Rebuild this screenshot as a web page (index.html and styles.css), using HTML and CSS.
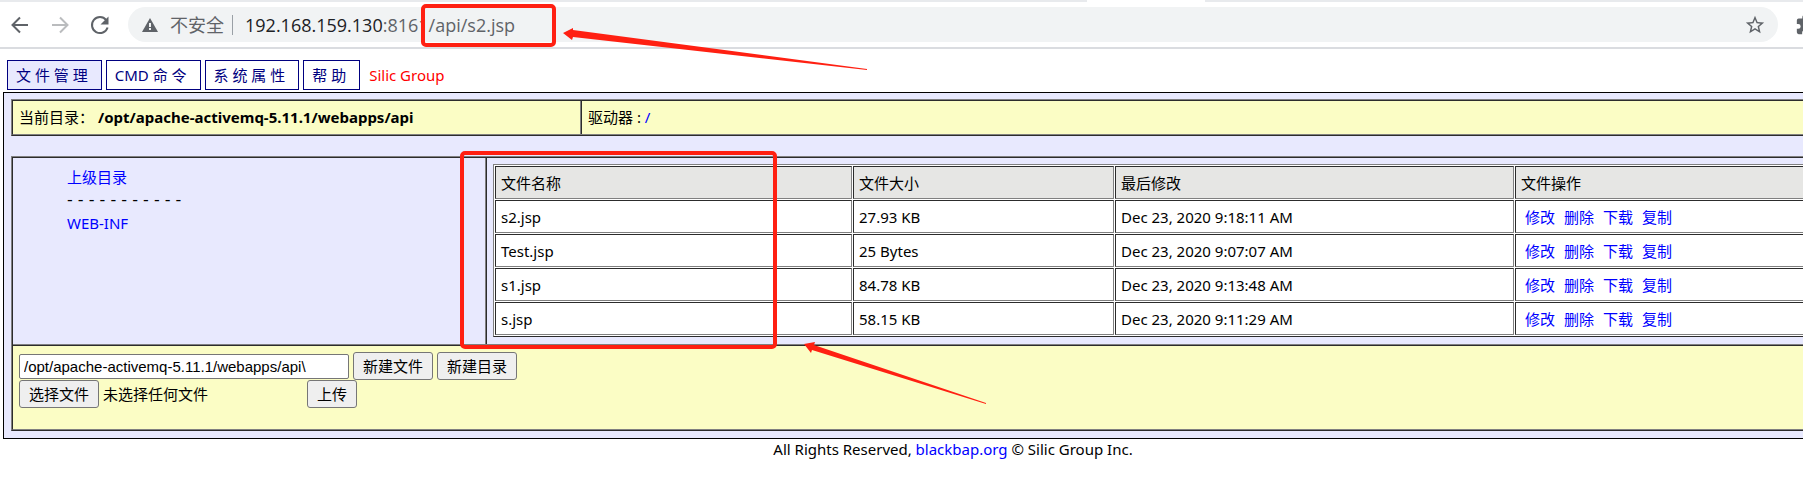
FILE: index.html
```html
<!DOCTYPE html>
<html lang="zh-CN">
<head>
<meta charset="utf-8">
<title>文件管理</title>
<link rel="stylesheet" href="styles.css">
</head>
<body>
<header class="toolbar">
  <div class="tabstrip"><span class="active-tab"></span></div>
  <div class="toolbar-row">
    <button class="icon-button" type="button" aria-label="后退"><svg width="24" height="24" viewBox="0 0 24 24" fill="none" stroke="#5f6368" stroke-width="2"><path d="M20 12H5M12 4.500L4.500 12l7.500 7.500"/></svg></button>
    <button class="icon-button" type="button" aria-label="前进"><svg width="24" height="24" viewBox="0 0 24 24" fill="none" stroke="#babcbe" stroke-width="2"><path d="M4 12h15M12 4.500l7.500 7.500-7.500 7.500"/></svg></button>
    <button class="icon-button" type="button" aria-label="刷新"><svg width="24" height="24" viewBox="0 0 24 24"><path fill="none" stroke="#5f6368" stroke-width="2" d="M18.200 7A8 8 0 1 0 19.600 14.500"/><path fill="#5f6368" d="M20.500 3.500v8h-8z"/></svg></button>
    <div class="address">
      <svg width="18" height="18" viewBox="0 0 18 18"><path fill="#5f6368" d="M9 2l8 14H1z"/><path fill="#f1f3f4" d="M8 7h2v4H8zM8 12h2v2H8z"/></svg>
      <span class="insecure">不安全</span>
      <span class="separator"></span>
      <span class="url"><span class="host">192.168.159.130</span>:8161/api/s2.jsp</span>
      <button class="icon-button star" type="button" aria-label="收藏"><svg width="22" height="22" viewBox="0 0 24 24"><path fill="#5f6368" d="M22 9.240l-7.190-.620L12 2 9.190 8.630 2 9.240l5.460 4.730L5.820 21 12 17.270 18.180 21l-1.630-7.030L22 9.240zM12 15.400l-3.760 2.270 1-4.280-3.320-2.880 4.380-.380L12 6.100l1.710 4.040 4.380.380-3.320 2.880 1 4.280L12 15.400z"/></svg></button>
    </div>
    <button class="icon-button extensions" type="button" aria-label="扩展程序"><svg width="22" height="22" viewBox="0 0 24 24"><path fill="#5f6368" d="M20.500 11H19V7a2 2 0 0 0-2-2h-4V3.500a2.500 2.500 0 0 0-5 0V5H4a2 2 0 0 0-2 2v3.800h1.500a2.700 2.700 0 0 1 0 5.400H2V20a2 2 0 0 0 2 2h3.800v-1.500a2.700 2.700 0 0 1 5.400 0V22H17a2 2 0 0 0 2-2v-4h1.500a2.500 2.500 0 0 0 0-5z"/></svg></button>
  </div>
</header>

<div class="page">
  <nav class="menu">
    <a class="menu-item current" href="#files">文 件 管 理</a>
    <a class="menu-item" href="#cmd">CMD 命 令</a>
    <a class="menu-item" href="#props">系 统 属 性</a>
    <a class="menu-item" href="#help">帮 助</a>
    <a class="brand" href="#brand">Silic Group</a>
  </nav>

  <main class="frame">
    <section class="info">
      <div class="info-cell">当前目录：<b class="path">/opt/apache-activemq-5.11.1/webapps/api</b></div>
      <div class="info-cell">驱动器 : <a href="#root">/</a></div>
    </section>

    <section class="browser">
      <div class="panes">
        <div class="tree">
          <a href="#up">上级目录</a>
          <span class="dashes">- - - - - - - - - - -</span>
          <a href="#web-inf">WEB-INF</a>
        </div>
        <div class="listing">
          <table class="files">
            <colgroup><col class="col-name"><col class="col-size"><col class="col-date"><col></colgroup>
            <thead><tr><th>文件名称</th><th>文件大小</th><th>最后修改</th><th>文件操作</th></tr></thead>
            <tbody>
              <tr><td>s2.jsp</td><td>27.93 KB</td><td>Dec 23, 2020 9:18:11 AM</td><td><div class="actions"><a href="#e">修改</a><a href="#d">删除</a><a href="#g">下载</a><a href="#c">复制</a></div></td></tr>
              <tr><td>Test.jsp</td><td>25 Bytes</td><td>Dec 23, 2020 9:07:07 AM</td><td><div class="actions"><a href="#e">修改</a><a href="#d">删除</a><a href="#g">下载</a><a href="#c">复制</a></div></td></tr>
              <tr><td>s1.jsp</td><td>84.78 KB</td><td>Dec 23, 2020 9:13:48 AM</td><td><div class="actions"><a href="#e">修改</a><a href="#d">删除</a><a href="#g">下载</a><a href="#c">复制</a></div></td></tr>
              <tr><td>s.jsp</td><td>58.15 KB</td><td>Dec 23, 2020 9:11:29 AM</td><td><div class="actions"><a href="#e">修改</a><a href="#d">删除</a><a href="#g">下载</a><a href="#c">复制</a></div></td></tr>
            </tbody>
          </table>
        </div>
      </div>
      <form class="forms">
        <div class="form-row">
          <input class="path-input" type="text" aria-label="路径" value="/opt/apache-activemq-5.11.1/webapps/api\">
          <button class="button" type="button">新建文件</button>
          <button class="button" type="button">新建目录</button>
        </div>
        <div class="form-row">
          <input class="file-input" id="upload" type="file">
          <label class="button" for="upload">选择文件</label>
          <span class="file-name">未选择任何文件</span>
          <button class="button" type="button">上传</button>
        </div>
      </form>
    </section>
  </main>
  <footer class="footer">All Rights Reserved, <a href="#site">blackbap.org</a> © Silic Group Inc.</footer>
</div>

<svg class="marks" width="1803" height="492" viewBox="0 0 1803 492" aria-hidden="true">
  <g fill="none" stroke="#ff2012" stroke-width="4">
    <rect x="423" y="6" width="131" height="39" rx="3"/>
    <rect x="462" y="153" width="313" height="194" rx="3"/>
  </g>
  <g fill="#ff2012">
    <path d="M563 33l10-5v2l294 39v1L573 37l-1 3z"/>
    <path d="M804 344l11-2-1 3 172 58v1L812 350l-1 3z"/>
  </g>
</svg>
</body>
</html>
```
FILE: styles.css
```css
* { box-sizing: border-box; }
body {
  margin: 0;
  position: relative;
  overflow-x: hidden;
  background: #fff;
  color: #000;
  font: 15px/20px "Noto Sans", "Noto Sans CJK SC", sans-serif;
}
a { color: #0000ff; text-decoration: none; }
button { font: inherit; }

.toolbar { border-bottom: 2px solid #dadce0; overflow: hidden; }
.tabstrip { height: 2px; padding-left: 1087px; background: #e8eaed; }
.active-tab { display: block; width: 118px; height: 2px; background: #fff; }
.toolbar-row { display: flex; align-items: center; padding: 5px 0 5px 8px; }
.icon-button {
  display: flex;
  flex: none;
  margin: 0 16px 0 0;
  padding: 0;
  border: 0;
  background: none;
}
.address {
  display: flex;
  flex: 1;
  align-items: center;
  height: 35px;
  padding: 0 12px 0 13px;
  border-radius: 18px;
  background: #f1f3f4;
  color: #5f6368;
  font-family: "Open Sans", "Noto Sans CJK SC", sans-serif;
  font-size: 18px;
}
.insecure { margin-left: 11px; }
.separator { width: 1px; height: 20px; margin: 0 12px 0 8px; background: #9aa0a6; }
.url { flex: 1; }
.host { color: #202124; }
.star { margin: 0; }
.extensions { width: 8px; margin: 0 0 0 17px; overflow: hidden; }
.extensions svg { flex: none; }

.page { width: calc(100% + 103px); padding: 11px 3px 0; }
.menu { display: flex; gap: 4px; align-items: center; padding: 0 4px 2px; }
.menu-item {
  padding: 4px 13px 4px 8px;
  border: 1px solid #000080;
  color: #000080;
}
.current { background: #e8e9fe; }
.brand { padding-left: 5px; color: #f00; }

.frame { padding: 6px 7px 7px; border: 1px solid #000; background: #e8e9fe; }
.info { display: grid; grid-template-columns: 567px 1fr; border: 2px ridge #808080; background: #fbfdc5; }
.info-cell { padding: 6px 6px 7px; }
.info-cell + .info-cell { border-left: 2px ridge #808080; }
.path { margin-left: 4px; }

.browser { margin-top: 20px; border: 2px ridge #808080; }
.panes { display: grid; grid-template-columns: 472px 1fr; }
.tree { display: flex; flex-direction: column; gap: 4px; padding: 9px 54px; }
.dashes { font: 16px/18px "DejaVu Sans", sans-serif; }
.listing { padding: 6px 6px 7px; border-left: 2px ridge #808080; }
.files {
  width: 100%;
  table-layout: fixed;
  border: 1px solid;
  border-color: #808080 #2c2c2c #2c2c2c #808080;
  border-spacing: 1px;
  background: #fff;
}
.files th, .files td {
  height: 33px;
  padding: 5px;
  border: 1px solid;
  border-color: #2c2c2c #808080 #808080 #2c2c2c;
  font-weight: normal;
  text-align: left;
}
.files th { background: #e6e6e4; }
.col-name { width: 357px; }
.col-size { width: 261px; }
.col-date { width: 399px; }
.actions { display: flex; gap: 9px; padding-left: 4px; }

.forms { padding: 6px 6px 21px; border-top: 2px ridge #808080; background: #fbfdc5; }
.form-row { display: flex; gap: 4px; align-items: center; }
.path-input {
  width: 330px;
  height: 25px;
  padding: 1px 4px;
  border: 1px solid #767676;
  border-radius: 2px;
  font: 15px "Liberation Sans", sans-serif;
}
.button {
  height: 28px;
  padding: 3px 9px;
  border: 1px solid #767676;
  border-radius: 3px;
  background: #efefef;
  color: #000;
}
.file-input { position: absolute; width: 1px; height: 1px; opacity: 0; }
.file-name { width: 200px; }
.footer { text-align: center; }

.marks { position: absolute; top: 0; left: 0; pointer-events: none; }
```
